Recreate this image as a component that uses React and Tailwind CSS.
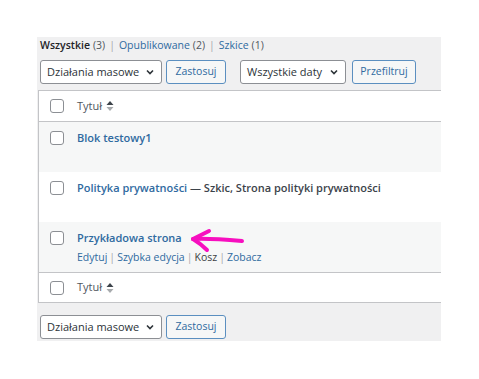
import React from "react";

const font = { fontFamily: '"Open Sans", "Noto Sans", sans-serif' };

function Checkbox() {
  return <span className="block w-[14px] h-[14px] rounded-[3px] border border-[#8c8f94] bg-white shrink-0" />;
}

function Chevron() {
  return (
    <svg width="10" height="10" viewBox="0 0 10 10" className="shrink-0">
      <path d="M2 3.5 L5 6.5 L8 3.5" fill="none" stroke="#2c3338" strokeWidth="1.6" />
    </svg>
  );
}

function Select({ label, className = "" }) {
  return (
    <div className={`h-[24px] flex items-center justify-between whitespace-nowrap pl-[6px] pr-[6px] bg-white border border-[#8c8f94] rounded-[3px] text-[11px] text-[#2c3338] ${className}`}>
      <span>{label}</span>
      <Chevron />
    </div>
  );
}

function Button({ label, className = "" }) {
  return (
    <div className={`h-[24px] flex items-center justify-center whitespace-nowrap bg-[#f6f7f7] border border-[#5b8fc0] rounded-[3px] text-[10.5px] text-[#2f6aa0] ${className}`}>
      {label}
    </div>
  );
}

function SortIcon() {
  return (
    <svg width="8" height="12" viewBox="0 0 8 12" className="ml-[4px]">
      <path d="M4 1 L7.5 5 L0.5 5 Z" fill="#3c434a" />
      <path d="M4 11 L7.5 7 L0.5 7 Z" fill="#a7aaad" />
    </svg>
  );
}

function HeaderRow({ border }) {
  return (
    <div className={`h-[31px] bg-white flex items-center pl-[11px] ${border}`}>
      <Checkbox />
      <span className="ml-[13px] text-[11px] text-[#50575e]">Tytuł</span>
      <SortIcon />
    </div>
  );
}

function Arrow() {
  return (
    <svg width="60" height="30" viewBox="0 0 60 30" className="absolute left-[112px] -top-[6px]">
      <path
        d="M4 15 C18 14 36 15.5 53 17"
        fill="none"
        stroke="#f70fbf"
        strokeWidth="4"
        strokeLinecap="round"
      />
      <path
        d="M20 7 C14 10 8 13 4 15 C9 18 14 22 18 26"
        fill="none"
        stroke="#f70fbf"
        strokeWidth="4"
        strokeLinecap="round"
        strokeLinejoin="round"
      />
    </svg>
  );
}

export default function App() {
  return (
    <div className="w-[479px] h-[379px] bg-white pt-[37px] pl-[37px]" style={font}>
      <div className="w-[404px] h-[304px] bg-[#f0f0f1] overflow-hidden">
        <div className="h-[16px] mt-[1px] pl-[3px] flex items-center whitespace-nowrap text-[10.5px] text-[#50575e]">
          <span className="font-semibold text-[#1d2327]">Wszystkie</span>
          <span className="ml-[3px]">(3)</span>
          <span className="mx-[4px] text-[#a7aaad]">|</span>
          <span className="text-[#2f6aa0]">Opublikowane</span>
          <span className="ml-[3px]">(2)</span>
          <span className="mx-[4px] text-[#a7aaad]">|</span>
          <span className="text-[#2f6aa0]">Szkice</span>
          <span className="ml-[3px]">(1)</span>
        </div>

        <div className="mt-[6px] pl-[3px] flex items-center">
          <Select label="Działania masowe" className="w-[122px]" />
          <Button label="Zastosuj" className="ml-[4px] w-[60px]" />
          <Select label="Wszystkie daty" className="ml-[14px] w-[106px]" />
          <Button label="Przefiltruj" className="ml-[6px] w-[64px]" />
        </div>

        <div className="mt-[6px] ml-[1px] border-l border-t border-[#c3c4c7]">
          <HeaderRow border="border-b border-[#c3c4c7]" />

          <div className="h-[50px] bg-[#f6f7f7] flex items-start pl-[11px] pt-[9px]">
            <Checkbox />
            <span className="ml-[13px] -mt-[1px] text-[11px] font-semibold text-[#2f6aa0]">Blok testowy1</span>
          </div>

          <div className="h-[50px] bg-white flex items-start pl-[11px] pt-[9px]">
            <Checkbox />
            <span className="ml-[13px] -mt-[1px] whitespace-nowrap text-[11px] font-semibold text-[#2f6aa0]">
              Polityka prywatności
              <span className="text-[#3c434a]"> — Szkic, Strona polityki prywatności</span>
            </span>
          </div>

          <div className="h-[50px] bg-[#f6f7f7] flex items-start pl-[11px] pt-[9px]">
            <Checkbox />
            <div className="ml-[13px] -mt-[1px] flex flex-col">
              <div className="relative h-[16px] flex items-center">
                <span className="text-[11px] font-semibold text-[#2f6aa0]">Przykładowa strona</span>
                <Arrow />
              </div>
              <div className="mt-[4px] whitespace-nowrap text-[10.5px] text-[#2f6aa0] flex items-center">
                <span>Edytuj</span>
                <span className="mx-[2px] text-[#a7aaad]">|</span>
                <span>Szybka edycja</span>
                <span className="mx-[2px] text-[#a7aaad]">|</span>
                <span className="text-[#3c3f44]">Kosz</span>
                <span className="mx-[2px] text-[#a7aaad]">|</span>
                <span>Zobacz</span>
              </div>
            </div>
          </div>

          <HeaderRow border="border-t border-b border-[#c3c4c7]" />
        </div>

        <div className="mt-[12px] pl-[3px] flex items-center">
          <Select label="Działania masowe" className="w-[122px]" />
          <Button label="Zastosuj" className="ml-[4px] w-[60px]" />
        </div>
      </div>
    </div>
  );
}
